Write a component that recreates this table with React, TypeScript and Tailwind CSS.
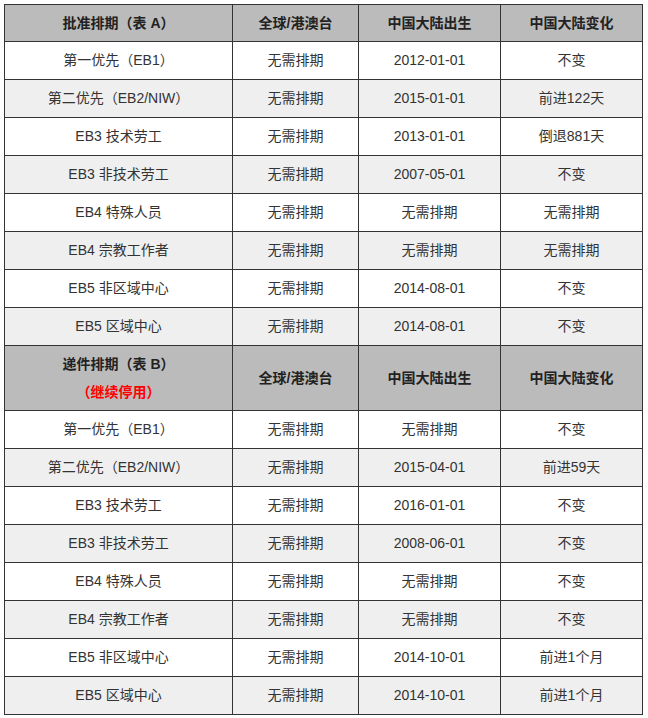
const tableA = [
  ["第一优先（EB1）", "无需排期", "2012-01-01", "不变"],
  ["第二优先（EB2/NIW）", "无需排期", "2015-01-01", "前进122天"],
  ["EB3 技术劳工", "无需排期", "2013-01-01", "倒退881天"],
  ["EB3 非技术劳工", "无需排期", "2007-05-01", "不变"],
  ["EB4 特殊人员", "无需排期", "无需排期", "无需排期"],
  ["EB4 宗教工作者", "无需排期", "无需排期", "无需排期"],
  ["EB5 非区域中心", "无需排期", "2014-08-01", "不变"],
  ["EB5 区域中心", "无需排期", "2014-08-01", "不变"],
];

const tableB = [
  ["第一优先（EB1）", "无需排期", "无需排期", "不变"],
  ["第二优先（EB2/NIW）", "无需排期", "2015-04-01", "前进59天"],
  ["EB3 技术劳工", "无需排期", "2016-01-01", "不变"],
  ["EB3 非技术劳工", "无需排期", "2008-06-01", "不变"],
  ["EB4 特殊人员", "无需排期", "无需排期", "不变"],
  ["EB4 宗教工作者", "无需排期", "无需排期", "不变"],
  ["EB5 非区域中心", "无需排期", "2014-10-01", "前进1个月"],
  ["EB5 区域中心", "无需排期", "2014-10-01", "前进1个月"],
];

const cell = "border border-[#333] text-center align-middle p-0";

const HeaderCols = () => (
  <>
    <th className={cell + " font-bold"}>全球/港澳台</th>
    <th className={cell + " font-bold"}>中国大陆出生</th>
    <th className={cell + " font-bold"}>中国大陆变化</th>
  </>
);

const Rows = ({ rows }: { rows: string[][] }) => (
  <>
    {rows.map((r, i) => (
      <tr key={i} className={"h-[38px] " + (i % 2 === 1 ? "bg-[#efefef]" : "bg-white")}>
        {r.map((c, j) => (
          <td key={j} className={cell}>
            {c}
          </td>
        ))}
      </tr>
    ))}
  </>
);

export default function App() {
  return (
    <div
      className="bg-white w-[648px] h-[718px] pt-[4px] pl-[4px] text-[14px] text-[#333]"
      style={{ fontFamily: '"Liberation Sans", Arial, "Noto Sans CJK SC", sans-serif' }}
    >
      <table className="border-collapse table-fixed w-[638px]">
        <colgroup>
          <col className="w-[228px]" />
          <col className="w-[126px]" />
          <col className="w-[142px]" />
          <col className="w-[142px]" />
        </colgroup>
        <tbody>
          <tr className="h-[37px] bg-[#bbbbbb] text-[#222]">
            <th className={cell + " font-bold"}>批准排期（表 A）</th>
            <HeaderCols />
          </tr>
          <Rows rows={tableA} />
          <tr className="h-[65px] bg-[#bbbbbb] text-[#222]">
            <th className={cell + " font-bold leading-[28px]"}>
              <div>递件排期（表 B）</div>
              <div className="text-[#ff0000]">（继续停用）</div>
            </th>
            <HeaderCols />
          </tr>
          <Rows rows={tableB} />
        </tbody>
      </table>
    </div>
  );
}
